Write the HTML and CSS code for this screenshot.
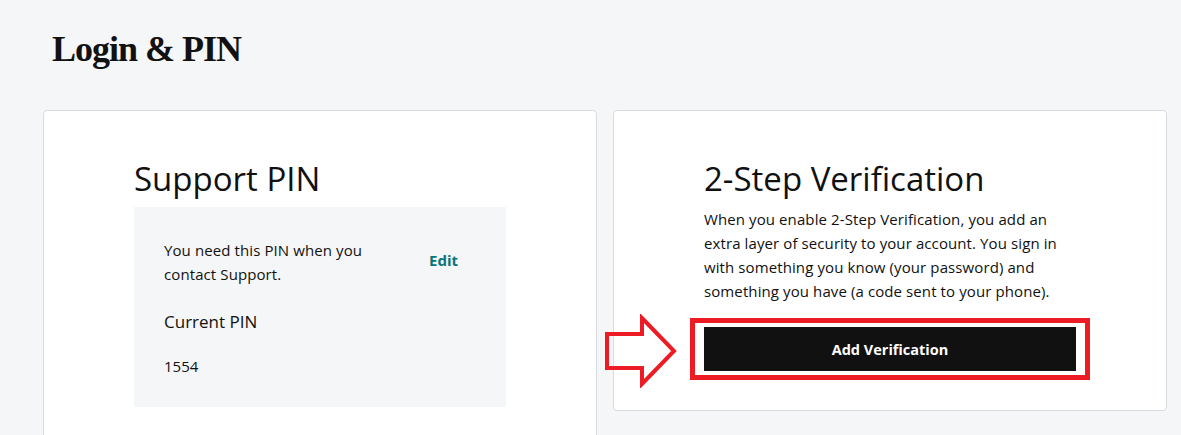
FILE: index.html
```html
<!DOCTYPE html>
<html lang="en">
<head>
    <meta charset="UTF-8">
    <title>Login &amp; PIN</title>
    <link rel="stylesheet" href="styles.css">
</head>
<body>
<div class="page">
    <h1 class="page-title">Login &amp; PIN</h1>

    <div class="cards">
        <section class="card card-pin">
            <div class="card-inner">
                <h2>Support PIN</h2>
                <div class="pin-box">
                    <div class="pin-row">
                        <p class="pin-note">You need this PIN when you contact Support.</p>
                        <a class="edit-link" href="#">Edit</a>
                    </div>
                    <h3 class="pin-label">Current PIN</h3>
                    <p class="pin-value">1554</p>
                </div>
            </div>
        </section>

        <section class="card">
            <div class="card-inner">
                <h2>2-Step Verification</h2>
                <p class="lead">When you enable 2-Step Verification, you add an extra layer of security to your account. You sign in with something you know (your password) and something you have (a code sent to your phone).</p>
                <div class="btn-wrap">
                    <button class="btn-dark">Add Verification</button>
                    <!-- annotation: red frame + arrow -->
                    <div class="mark-box"></div>
                    <svg class="mark-arrow" width="74" height="74" viewBox="0 0 74 74">
                        <polygon points="4,20 39,20 39,4 71,37 39,70 39,54 4,54" fill="none" stroke="#ed1c24" stroke-width="4" stroke-linejoin="miter"/>
                    </svg>
                </div>
            </div>
        </section>
    </div>
</div>
</body>
</html>
```

FILE: styles.css
```css
* {
    box-sizing: border-box;
}
body {
    margin: 0;
    background-color: #f5f6f8;
    color: #111;
    font-family: "Open Sans", "Liberation Sans", sans-serif;
    overflow: hidden;
}

.page {
    padding: 29px 14px 0 43px;
}

.page-title {
    margin: 0 0 41px 9px;
    font-family: "Liberation Serif", serif;
    font-weight: 700;
    font-size: 36px;
    line-height: 40px;
    letter-spacing: -1px;
}

.cards {
    display: grid;
    grid-template-columns: 554px 554px;
    column-gap: 16px;
    align-items: start;
}

.card {
    background: #fff;
    border: 1px solid #d6dce1;
    border-radius: 4px;
    padding: 47px 0 39px;
}
.card-pin {
    padding-bottom: 60px;
}
.card-inner {
    width: 372px;
    margin: 0 auto;
}

.card h2 {
    margin: 0 0 8px;
    font-weight: 400;
    font-size: 33px;
    line-height: 41px;
}

/* support pin */
.pin-box {
    background: #f5f6f8;
    padding: 31px 48px 29px 30px;
}
.pin-row {
    display: flex;
    align-items: center;
    justify-content: space-between;
}
.pin-note {
    margin: 0;
    width: 235px;
    font-size: 15px;
    letter-spacing: .1px;
    line-height: 24px;
}
.edit-link {
    color: #09757a;
    font-weight: 700;
    font-size: 15px;
    text-decoration: none;
    margin-top: -4px;
}
.pin-label {
    margin: 24px 0 20px;
    font-weight: 400;
    font-size: 17px;
    line-height: 24px;
}
.pin-value {
    margin: 0;
    font-size: 15px;
    line-height: 24px;
}

/* 2-step */
.lead {
    margin: 0 0 24px;
    font-size: 15px;
    letter-spacing: .1px;
    line-height: 24px;
}
.btn-wrap {
    position: relative;
}
.btn-dark {
    display: block;
    width: 100%;
    height: 44px;
    border: 0;
    background: #111;
    color: #fff;
    font-family: inherit;
    font-weight: 700;
    font-size: 14.5px;
}

.mark-box {
    position: absolute;
    left: -14px;
    top: -9px;
    width: 400px;
    height: 62px;
    border: 5px solid #ed1c24;
}
.mark-arrow {
    position: absolute;
    left: -101px;
    top: -13px;
}
```
